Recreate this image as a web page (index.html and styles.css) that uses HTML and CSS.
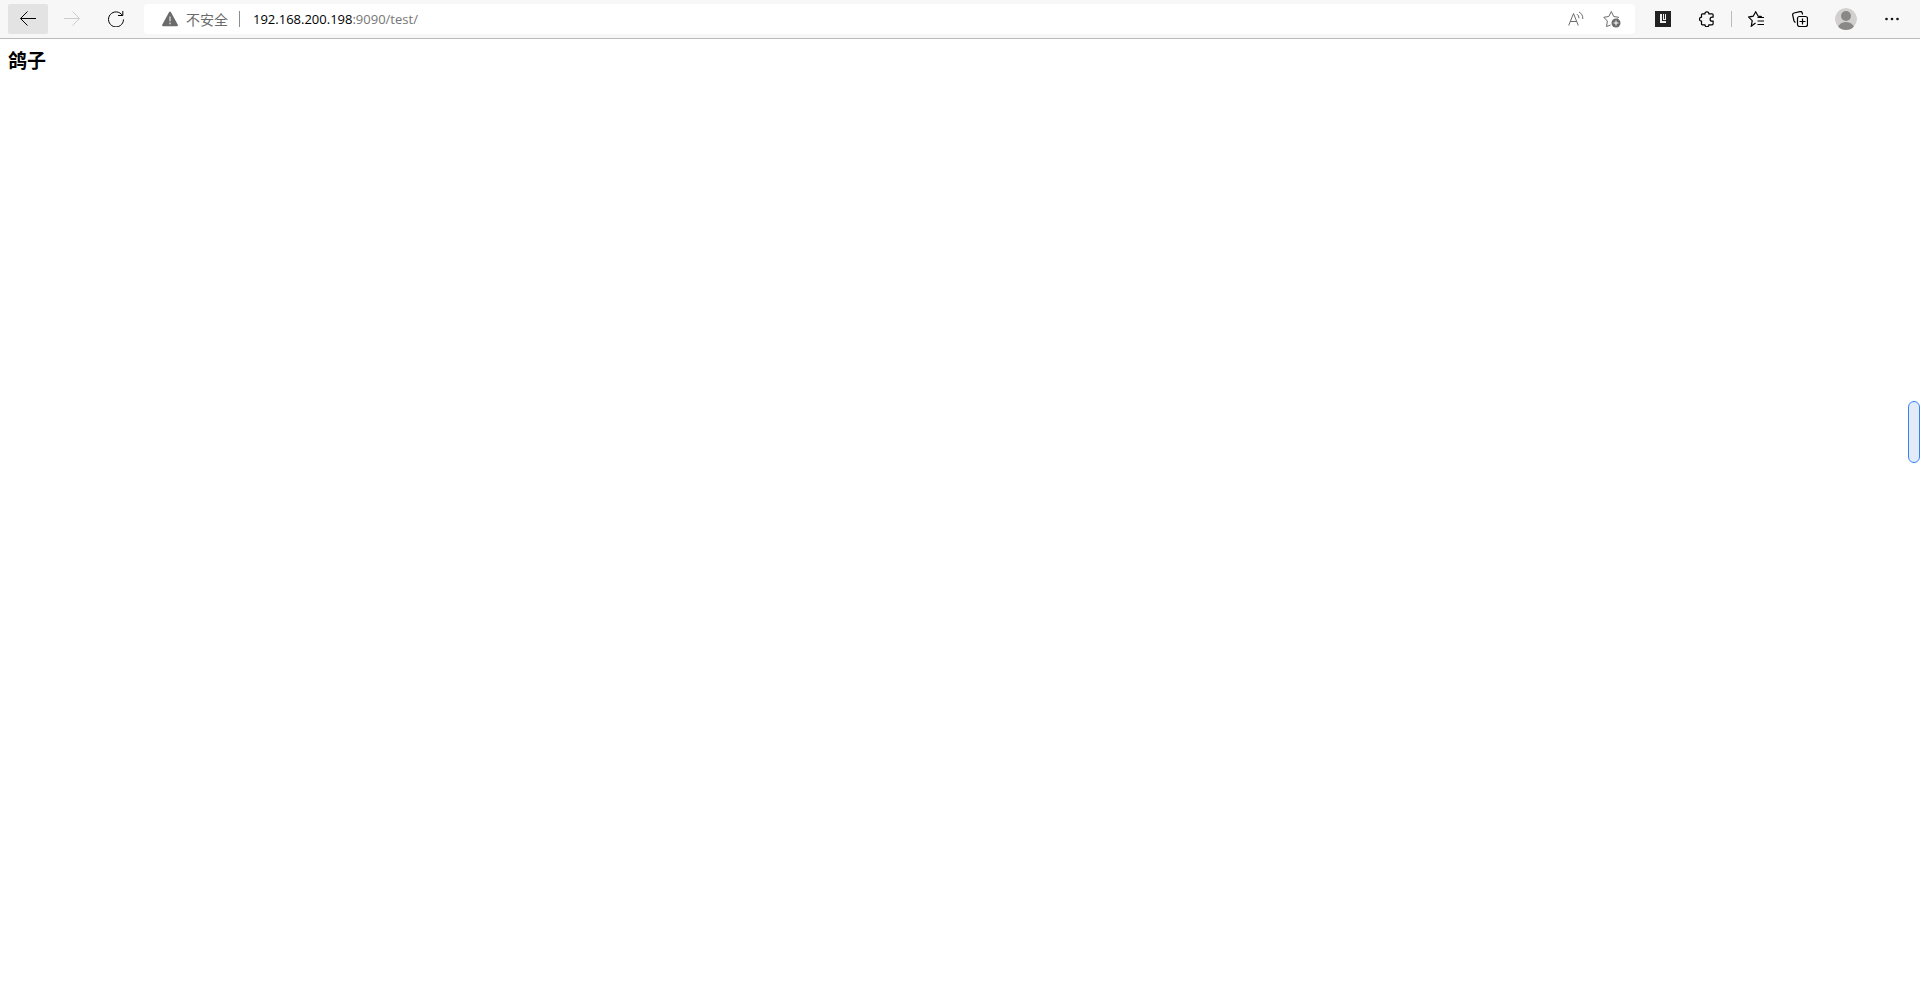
FILE: index.html
```html
<!DOCTYPE html>
<html lang="zh-CN">

<head>
  <meta charset="UTF-8" />
  <meta name="viewport" content="width=device-width, initial-scale=1.0" />
  <title>test</title>
  <link rel="stylesheet" href="styles.css">
</head>

<body>
  <header class="toolbar">
    <button class="tool-btn active" type="button" aria-label="Back">
      <svg width="16" height="16" viewBox="0 0 16 16"><path d="M16 7.5H.7M7.5 .5l-7 7 7 7" /></svg>
    </button>
    <button class="tool-btn" type="button" aria-label="Forward" disabled>
      <svg width="16" height="16" viewBox="0 0 16 16"><path d="M0 7.5h15.3M8.5 .5l7 7-7 7" /></svg>
    </button>
    <button class="tool-btn" type="button" aria-label="Refresh">
      <svg width="16" height="16" viewBox="0 0 16 16"><path d="M14.4 4.5A7.5 7.5 0 1 0 15.5 8.5M14.8 0v4.5H10" /></svg>
    </button>

    <form class="address-bar">
      <button class="security" type="button">
        <svg width="16" height="16" viewBox="0 0 16 16">
          <path class="solid" d="M7 1.2a1.2 1.2 0 0 1 2 0l6.8 12.6a1 1 0 0 1-.9 1.5H1.1a1 1 0 0 1-.9-1.5z" />
          <path class="mark" d="M8 5.5v4.8M8 11.5v1.8" />
        </svg>
        <span>不安全</span>
      </button>
      <span class="divider"></span>
      <a class="url" href="#"><span class="host">192.168.200.198</span>:9090/test/</a>
      <button class="field-btn" type="button" aria-label="Read aloud">
        <svg width="16" height="16" viewBox="0 0 16 16">
          <path d="M.7 14.5L5.5 2.5l4.8 12M2.3 10.5h6.4M9 3.2q2 1.3 2 4M11 1q4 2 3.8 7" />
        </svg>
      </button>
      <button class="field-btn" type="button" aria-label="Add to favorites">
        <svg width="18" height="18" viewBox="0 0 18 18">
          <path d="M7.5 15L3.5 16.5l.9-5.4L.8 7.3l5-.8L8.3 1.5l2.4 5 5 .8-1.2 1.2" />
          <circle class="solid" cx="13" cy="13" r="4.5" />
          <path class="mark" d="M13 10.5v5M10.5 13h5" />
        </svg>
      </button>
    </form>

    <button class="tool-btn" type="button" aria-label="Extension">
      <svg width="16" height="16" viewBox="0 0 16 16">
        <path class="ext-bg" d="M0 0h16v16H0z" />
        <path class="ext-mark" d="M5 3h2v7h4v2H5zM8 3h1v5h1V3h1v6H8z" />
      </svg>
    </button>
    <button class="tool-btn" type="button" aria-label="Extensions">
      <svg class="bold" width="16" height="16" viewBox="0 0 16 16">
        <path d="M3.5 2.8h2.4a2 2 0 0 1 4 0h3.2q1 0 1 1v2.4h-1a2 2 0 0 0 0 4h1v2.6q0 1-1 1H9.9a2 2 0 0 1-4 0H3.5q-1 0-1-1v-2.6a2 2 0 0 1 0-4V3.8q0-1 1-1z" />
      </svg>
    </button>
    <span class="divider"></span>
    <button class="tool-btn" type="button" aria-label="Favorites">
      <svg class="bold" width="16" height="16" viewBox="0 0 16 16">
        <path d="M7.5 12L3.3 15.2l.9-5.5L.6 6.1l4.6-.9L7.7.8l2.5 4.4 3.6.5M9.5 6.5H16M9.5 10H16M9.5 13.5H16" />
      </svg>
    </button>
    <button class="tool-btn" type="button" aria-label="Collections">
      <svg class="bold" width="16" height="16" viewBox="0 0 16 16">
        <path d="M3.5 11.5Q2.3 11 1.9 9.5L.7 4.2Q.3 2.5 2 2L8 .6q1.8-.4 2.2 1.2l.4 1.7" />
        <rect x="5.5" y="5.5" width="10" height="10" rx="2" />
        <path d="M10.5 7.5v6M7.5 10.5h6" />
      </svg>
    </button>
    <button class="tool-btn profile" type="button" aria-label="Profile">
      <svg width="22" height="22" viewBox="0 0 22 22">
        <clipPath id="avatar"><circle cx="11" cy="11" r="11" /></clipPath>
        <g clip-path="url(#avatar)">
          <circle class="avatar-bg" cx="11" cy="11" r="11" />
          <circle class="avatar-fg" cx="11" cy="8" r="5" />
          <ellipse class="avatar-fg" cx="11" cy="20" rx="8" ry="6" />
        </g>
      </svg>
    </button>
    <button class="tool-btn" type="button" aria-label="Settings and more">
      <svg width="16" height="16" viewBox="0 0 16 16">
        <g class="dots"><circle cx="2.5" cy="8" r="1.3" /><circle cx="8" cy="8" r="1.3" /><circle cx="13.5" cy="8" r="1.3" /></g>
      </svg>
    </button>
  </header>

  <main>
    <h3>鸽子</h3>
  </main>

  <button class="side-handle" type="button" aria-label="Open side panel"></button>
</body>

</html>
```
FILE: styles.css
```css
* {
  box-sizing: border-box;
}

body {
  margin: 0;
  background-color: #fff;
  color: #000;
  font-family: "Open Sans", "Noto Sans CJK SC", sans-serif;
}

button {
  display: flex;
  align-items: center;
  justify-content: center;
  padding: 0;
  border: none;
  background: none;
  color: inherit;
  font: inherit;
}

svg {
  fill: none;
  stroke: currentColor;
}

.bold {
  stroke-width: 1.2;
}

.toolbar {
  display: flex;
  align-items: center;
  gap: 4px;
  padding: 4px 8px;
  border-bottom: 1px solid #bbb;
  background-color: #f7f7f7;
}

.tool-btn {
  width: 40px;
  height: 30px;
  border-radius: 2px;
  color: #000;
}

.tool-btn.active {
  background-color: #e3e3e3;
}

.tool-btn:disabled {
  color: #ccc;
}

.profile {
  margin: 0 2px;
}

.divider {
  width: 1px;
  height: 16px;
  background-color: #bbb;
}

.address-bar {
  flex: 1;
  display: flex;
  align-items: center;
  height: 30px;
  margin: 0 4px;
  padding: 0 5px 0 18px;
  border-radius: 4px;
  background-color: #fff;
  font-size: 13px;
  color: #6b6b6b;
}

.address-bar .divider {
  margin: 0 13px 0 11px;
  background-color: #8c8c8c;
}

.security {
  gap: 8px;
  font-size: 14px;
}

.url {
  flex: 1;
  color: #767676;
  text-decoration: none;
}

.host {
  color: #000;
}

.field-btn {
  width: 36px;
  height: 30px;
}

.solid {
  fill: currentColor;
  stroke: none;
}

.mark {
  stroke: #fff;
}

.ext-bg {
  fill: #222;
  stroke: none;
}

.ext-mark {
  fill: #eee;
  stroke: none;
}

.avatar-bg {
  fill: #d2d0ce;
  stroke: none;
}

.avatar-fg {
  fill: #8a8886;
  stroke: none;
}

.dots {
  fill: #111;
  stroke: none;
}

main {
  padding: 8px;
}

h3 {
  margin: 0;
  font-size: 19px;
  line-height: 28px;
}

/* drag handle resting on the right edge, above the page */
.side-handle {
  position: fixed;
  top: 401px;
  right: 0;
  width: 12px;
  height: 62px;
  border: 1px solid #3584f7;
  border-radius: 6px;
  background-color: #e3ebfb;
}
```
